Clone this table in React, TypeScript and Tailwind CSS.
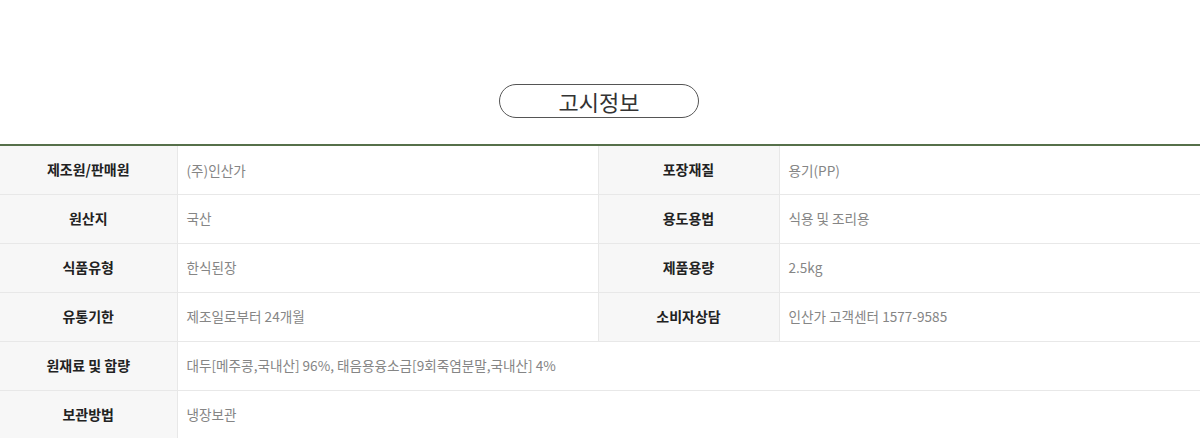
const rows: [string, string, string?, string?][] = [
  ['제조원/판매원', '(주)인산가', '포장재질', '용기(PP)'],
  ['원산지', '국산', '용도용법', '식용 및 조리용'],
  ['식품유형', '한식된장', '제품용량', '2.5kg'],
  ['유통기한', '제조일로부터 24개월', '소비자상담', '인산가 고객센터 1577-9585'],
  ['원재료 및 함량', '대두[메주콩,국내산] 96%, 태음용융소금[9회죽염분말,국내산] 4%'],
  ['보관방법', '냉장보관'],
]

const th =
  'h-[49px] bg-[#f7f7f7] border-b border-r border-[#e8e8e8] text-center text-[14px] font-bold text-[#222] p-0'
const td =
  'h-[49px] border-b border-r border-[#e8e8e8] pl-[9px] text-left text-[13.6px] text-[#858585] p-0'

export default function App() {
  return (
    <div
      className="w-[1200px] h-[438px] overflow-hidden bg-white"
      style={{ fontFamily: '"Noto Sans CJK KR", "Noto Sans", sans-serif' }}
    >
      <div className="pt-[84px] flex justify-center">
        <div className="w-[200px] h-[34px] -ml-[2px] rounded-full border border-[#555] flex items-center justify-center text-[22px] text-[#333] leading-none">
          고시정보
        </div>
      </div>
      <table className="mt-[26px] w-[1200px] table-fixed border-collapse border-t-2 border-[#56704a]">
        <colgroup>
          <col className="w-[177px]" />
          <col className="w-[421px]" />
          <col className="w-[181px]" />
          <col className="w-[421px]" />
        </colgroup>
        <tbody>
          {rows.map(([k1, v1, k2, v2]) => (
            <tr key={k1}>
              <th className={th}>{k1}</th>
              {k2 ? (
                <>
                  <td className={td}>{v1}</td>
                  <th className={th}>{k2}</th>
                  <td className={td}>{v2}</td>
                </>
              ) : (
                <td className={td} colSpan={3}>
                  {v1}
                </td>
              )}
            </tr>
          ))}
        </tbody>
      </table>
    </div>
  )
}
